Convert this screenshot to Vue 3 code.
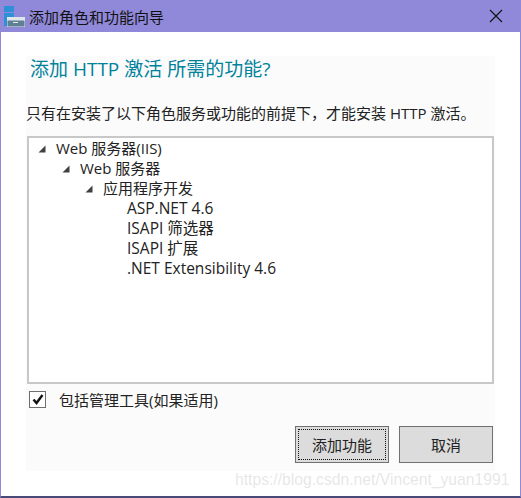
<script setup>
const tree = [
  { label: 'Web 服务器(IIS)', level: 0, open: true },
  { label: 'Web 服务器', level: 1, open: true },
  { label: '应用程序开发', level: 2, open: true },
  { label: 'ASP.NET 4.6', level: 3 },
  { label: 'ISAPI 筛选器', level: 3 },
  { label: 'ISAPI 扩展', level: 3 },
  { label: '.NET Extensibility 4.6', level: 3 },
]
</script>

<template>
  <div class="window">
    <header class="titlebar">
      <svg class="appicon" width="21" height="21" viewBox="0 0 21 21">
        <rect x="0" y="0" width="10" height="6" fill="#2f8fd8" />
        <rect x="0" y="7" width="10" height="13" fill="#2f8fd8" />
        <rect x="3" y="11" width="18" height="10" fill="#dfe6ea" />
        <rect x="3.5" y="14.5" width="17" height="6" fill="#5f7f92" />
        <rect x="9" y="16" width="5" height="1" fill="#e8eef2" />
      </svg>
      <span class="title">添加角色和功能向导</span>
      <svg class="close" width="14" height="14" viewBox="0 0 14 14">
        <path d="M1 1 13 13M13 1 1 13" stroke="#111" stroke-width="1.1" fill="none" />
      </svg>
    </header>

    <main class="content">
      <div class="panel">
        <h1 class="heading">添加 HTTP 激活 所需的功能?</h1>
        <p class="intro">只有在安装了以下角色服务或功能的前提下，才能安装 HTTP 激活。</p>
        <div class="tree">
          <div v-for="item in tree" :key="item.label" class="row" :class="'level' + item.level">
            <svg v-if="item.open" class="arrow" width="8" height="8" viewBox="0 0 8 8">
              <path d="M7.5 0.5V7.5H0.5Z" fill="#404040" />
            </svg>
            <span>{{ item.label }}</span>
          </div>
        </div>
        <label class="check">
          <span class="box">
            <svg width="12" height="11" viewBox="0 0 12 11">
              <path d="M1.5 5.5 4.5 9 10.5 1" stroke="#111" stroke-width="2.4" fill="none" />
            </svg>
          </span>
          <span>包括管理工具(如果适用)</span>
        </label>
        <div class="actions">
          <button class="btn primary"><span>添加功能</span></button>
          <button class="btn">取消</button>
        </div>
      </div>
    </main>

    <div class="watermark">https://blog.csdn.net/Vincent_yuan1991</div>
  </div>
</template>

<style scoped>
.window {
  position: relative;
  width: 521px;
  height: 498px;
  box-sizing: border-box;
  background: #fff;
  border-left: 1px solid #9088d8;
  border-right: 1px solid #9088d8;
  border-bottom: 2px solid #4a4a78;
  font-family: "Open Sans", "Noto Sans CJK SC", sans-serif;
  color: #222;
  overflow: hidden;
}
.titlebar {
  height: 32px;
  margin: 0 -1px;
  padding: 0 18px 0 4px;
  display: flex;
  align-items: center;
  background: #9088d8;
  color: #111;
}
.appicon { flex: none; margin-right: 4px; }
.title { font-size: 15px; flex: 1; }
.content { padding: 24px 25px 0; }
.panel {
  height: 415px;
  box-sizing: border-box;
  background: #fbfbfb;
  padding-top: 1px;
  display: flex;
  flex-direction: column;
}
.heading {
  margin: 0;
  padding-left: 4px;
  height: 24px;
  font-size: 19px;
  line-height: 24px;
  font-weight: 400;
  color: #00829b;
}
.intro {
  margin: 21px 0 0;
  height: 22px;
  font-size: 15px;
  line-height: 22px;
  white-space: nowrap;
}
.tree {
  margin: 12px 1px 0;
  height: 248px;
  box-sizing: border-box;
  border: 2px solid #c8c8c8;
  background: #fff;
}
.row {
  position: relative;
  height: 20px;
  line-height: 20px;
  font-size: 15px;
  white-space: nowrap;
}
.level0 { padding-left: 27px; }
.level1 { padding-left: 51px; }
.level2 { padding-left: 74px; }
.level3 { padding-left: 98px; font-size: 15.5px; }
.arrow { position: absolute; top: 7px; margin-left: -18px; }
.check {
  margin: 5px 0 0 3px;
  height: 20px;
  display: flex;
  align-items: center;
  font-size: 15px;
}
.box {
  width: 15px;
  height: 15px;
  margin-right: 13px;
  border: 1px solid #6e6e6e;
  background: #fff;
  display: flex;
  align-items: center;
  justify-content: center;
}
.actions {
  margin: 17px 2px 0 0;
  display: flex;
  justify-content: flex-end;
  gap: 10px;
}
.btn {
  width: 94px;
  height: 37px;
  box-sizing: border-box;
  padding: 0;
  border: 1px solid #707070;
  border-radius: 0;
  background: #dcdcdc;
  color: #222;
  font: inherit;
  font-size: 15px;
}
.primary { padding: 2px; }
.primary span {
  display: flex;
  height: 100%;
  align-items: center;
  justify-content: center;
  border: 1px dotted #111;
  box-sizing: border-box;
}
.watermark {
  position: absolute;
  left: 234px;
  top: 470px;
  font-family: "Liberation Sans", sans-serif;
  font-size: 15.7px;
  line-height: 20px;
  color: rgba(170, 170, 170, 0.3);
  white-space: nowrap;
}
</style>

<style>
html, body { margin: 0; }
</style>
